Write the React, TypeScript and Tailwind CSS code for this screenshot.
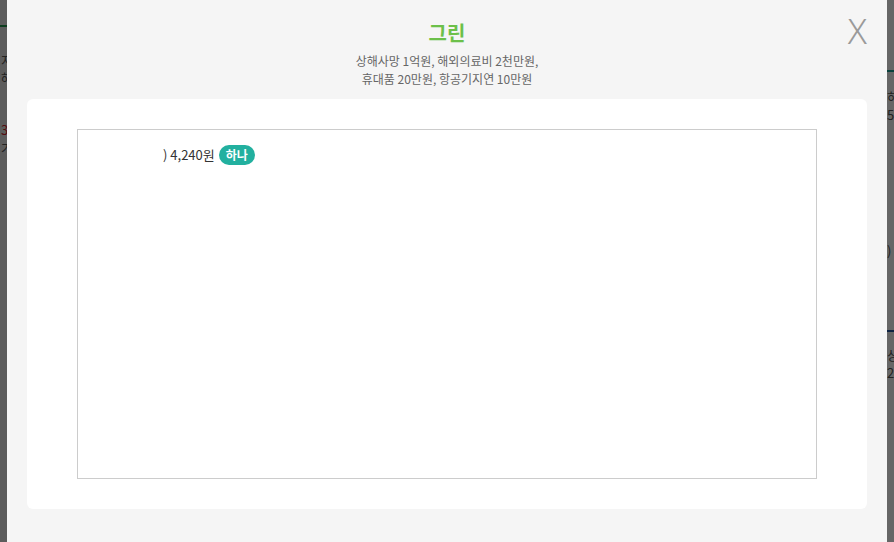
export default function App() {
  return (
    <div
      className="relative h-[542px] w-[894px] overflow-hidden bg-white"
      style={{ fontFamily: '"Noto Sans CJK KR", "Noto Sans", sans-serif' }}
    >
      {/* page behind the dialog */}
      <div className="flex h-full">
        <div className="w-[300px] bg-[#e6e6e6] pt-[25px]">
          <div className="h-[2px] bg-[#1f9a4c]" />
          <div className="pt-[24px] pl-[1px] text-[13px] leading-[18px] text-[#555]">
            <p>지역별 상품</p>
            <p>해외여행자보험</p>
          </div>
          <div className="pt-[34px] pl-[1px] text-[13px] leading-[18px]">
            <p className="text-[#d0222a]">3,210원</p>
            <p className="text-[#555]">가입하기</p>
          </div>
        </div>
        <div className="flex-1" />
        <div className="w-[300px] bg-white">
          <div className="mt-[70px] h-[2px] bg-[#1aa39a]" />
          <div className="pt-[16px] pl-[293px] text-[13px] leading-[18px] text-[#555]">
            <p>혀</p>
            <p>5</p>
          </div>
          <p className="pt-[117px] pl-[293px] text-[13px] leading-[19px] text-[#555]">)</p>
          <div className="mt-[70px] h-[2px] bg-[#2457a6]" />
          <div className="pt-[14px] pl-[293px] text-[13px] leading-[18px] text-[#555]">
            <p>상</p>
            <p>20</p>
          </div>
        </div>
      </div>

      {/* dim */}
      <div className="absolute inset-0 bg-black/60" />

      {/* dialog */}
      <div className="absolute top-0 left-[7px] flex h-full w-[880px] flex-col items-center bg-[#f5f5f5] pt-[20px]">
        <button
          className="absolute top-[11px] right-[20px] text-[35px] leading-[40px] font-light text-[#9a9a9a]"
          style={{ fontFamily: '"Noto Sans", sans-serif' }}
        >
          X
        </button>
        <h2 className="text-[20px] leading-[26px] font-bold text-[#6cc04a]">그린</h2>
        <p className="mt-[6px] text-center text-[12px] leading-[18px] text-[#666]">
          상해사망 1억원, 해외의료비 2천만원,
          <br />
          휴대품 20만원, 항공기지연 10만원
        </p>
        <div className="mt-[11px] w-[840px] rounded-[6px] bg-white px-[50px] py-[30px]">
          <div className="h-[350px] border border-[#cccccc] bg-white pt-[15px] pl-[85px]">
            <div className="flex items-center gap-[4px] text-[13px] text-[#333]">
              <span>) 4,240원</span>
              <span className="rounded-full bg-[#22b09f] px-[7px] text-[12px] leading-[20px] font-bold text-white">
                하나
              </span>
            </div>
          </div>
        </div>
      </div>
    </div>
  );
}
